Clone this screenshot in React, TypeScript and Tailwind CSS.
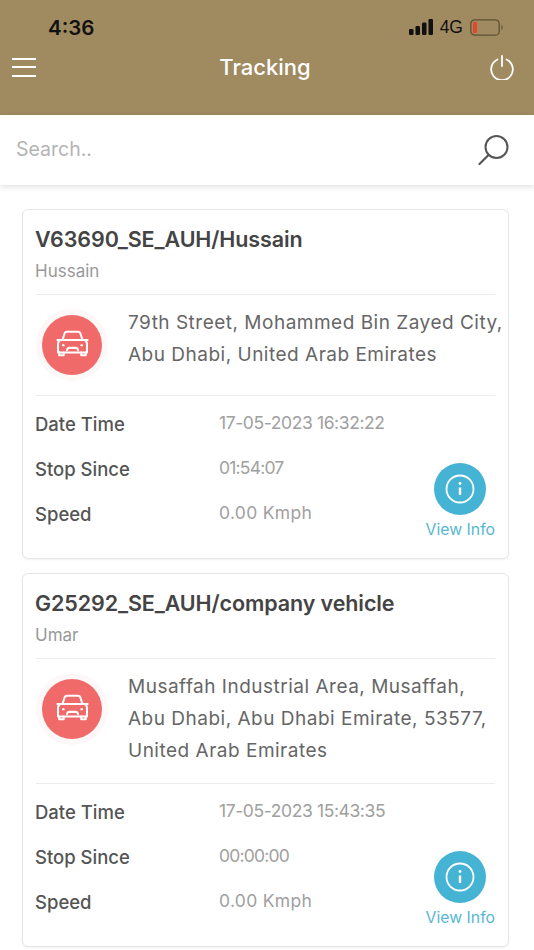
const FONT = 'font-["Inter","Noto_Sans",sans-serif]';

interface Vehicle {
  title: string;
  driver: string;
  address: string[];
  dateTime: string;
  stopSince: string;
  speed: string;
}

const VEHICLES: Vehicle[] = [
  {
    title: 'V63690_SE_AUH/Hussain',
    driver: 'Hussain',
    address: ['79th Street, Mohammed Bin Zayed City,', 'Abu Dhabi, United Arab Emirates'],
    dateTime: '17-05-2023 16:32:22',
    stopSince: '01:54:07',
    speed: '0.00 Kmph',
  },
  {
    title: 'G25292_SE_AUH/company vehicle',
    driver: 'Umar',
    address: ['Musaffah Industrial Area, Musaffah,', 'Abu Dhabi, Abu Dhabi Emirate, 53577,', 'United Arab Emirates'],
    dateTime: '17-05-2023 15:43:35',
    stopSince: '00:00:00',
    speed: '0.00 Kmph',
  },
];

function CarIcon() {
  return (
    <svg width="33" height="27.500" viewBox="0 0 36 30" fill="none" stroke="#fff" strokeWidth="2.2" strokeLinejoin="round" strokeLinecap="round" className="-mt-[3px]">
      <path d="M7 11 9.5 3.5C9.9 2.4 10.8 2 12 2h12c1.200 0 2.100.4 2.500 1.500L29 11" />
      <path d="M1.500 11H34.500" />
      <path d="M4 11.500c-1.200 1-1.800 2.200-1.800 3.500v9.500h31.600V15c0-1.300-.6-2.500-1.800-3.500" />
      <path d="M3.500 24.500v3h5v-3M27.500 24.500v3h5v-3" />
      <path d="M12 22c.4-2 1-2.500 2.500-2.500h7c1.500 0 2.100.5 2.500 2.500" />
      <circle cx="8" cy="16.500" r="1.300" fill="#fff" stroke="none" />
      <circle cx="28" cy="16.500" r="1.300" fill="#fff" stroke="none" />
    </svg>
  );
}

function VehicleCard({ v }: { v: Vehicle }) {
  return (
    <div className="w-[487px] rounded-[6px] border border-[#e6e6e6] bg-white px-[13px] shadow-[0_1px_2px_rgba(0,0,0,0.05)]">
      <div className="border-b border-[#ececec] pb-[12px] pt-[14px]">
        <h2 className="-ml-[1px] text-[21.500px] font-semibold leading-[30px] tracking-[-0.1px] text-[#444]">{v.title}</h2>
        <p className="-ml-[1px] mt-[6px] text-[17px] leading-[22px] text-[#999]">{v.driver}</p>
      </div>
      <div className="flex items-start border-b border-[#ececec] pt-[12px]">
        <div className="mb-[14px] mt-[2px] flex h-[72px] w-[72px] shrink-0 items-center justify-center rounded-full bg-[#fdf8f8]">
          <div className="flex h-[60px] w-[60px] items-center justify-center rounded-full bg-[#f06a6a]">
            <CarIcon />
          </div>
        </div>
        <div className="-mr-[8px] ml-[20px] whitespace-nowrap pb-[16px] text-[19px] leading-[32px] tracking-[0.5px] text-[#666]">
          {v.address.map((line) => (
            <div key={line}>{line}</div>
          ))}
        </div>
      </div>
      <div className="flex items-end justify-between pb-[17px] pt-[14px]">
        <div className="-ml-[1px] flex flex-col gap-[15px] pb-[11px]">
          <div className="flex h-[30px] items-center">
            <span className="w-[184px] text-[18.500px] font-medium text-[#555]">Date Time</span>
            <span className="-mt-[3px] text-[17.500px] tracking-[-0.4px] text-[#a0a0a0]">{v.dateTime}</span>
          </div>
          <div className="flex h-[30px] items-center">
            <span className="w-[184px] text-[18.500px] font-medium text-[#555]">Stop Since</span>
            <span className="-mt-[3px] text-[17.500px] tracking-[-0.8px] text-[#a0a0a0]">{v.stopSince}</span>
          </div>
          <div className="flex h-[30px] items-center">
            <span className="w-[184px] text-[18.500px] font-medium text-[#555]">Speed</span>
            <span className="-mt-[3px] text-[17.500px] tracking-[0.3px] text-[#a0a0a0]">{v.speed}</span>
          </div>
        </div>
        <div className="flex flex-col items-center">
          <div className="flex h-[52px] w-[52px] items-center justify-center rounded-full bg-[#45b3d3]">
            <svg width="30" height="30" viewBox="0 0 30 30" fill="none" stroke="#fff" strokeWidth="1.800">
              <circle cx="15" cy="15" r="13.500" />
              <path d="M15 13.500v7.500" strokeWidth="2.400" />
              <circle cx="15" cy="9.500" r="1.400" fill="#fff" stroke="none" />
            </svg>
          </div>
          <span className="mt-[4px] text-[15.800px] leading-[22px] text-[#57b8d2]">View Info</span>
        </div>
      </div>
    </div>
  );
}

export default function App() {
  return (
    <div className={`${FONT} h-[950px] w-[534px] overflow-hidden bg-white`}>
      <header className="h-[115px] bg-[#a08a60]">
        <div className="flex h-[41px] items-end justify-between pl-[48px] pr-[31px]">
          <span className="text-[20.500px] font-semibold leading-[26px] text-[#111]">4:36</span>
          <div className="mb-[5px] flex items-center gap-[7px]">
            <svg width="24" height="16" viewBox="0 0 24 16" fill="#111">
              <rect x="0" y="10" width="4.500" height="6" rx="1.200" />
              <rect x="6.500" y="7" width="4.500" height="9" rx="1.200" />
              <rect x="13" y="3.500" width="4.500" height="12.500" rx="1.200" />
              <rect x="19.500" y="0" width="4.500" height="16" rx="1.200" />
            </svg>
            <span className="font-['Liberation_Sans'] text-[17.500px] leading-[18px] text-[#111]">4G</span>
            <svg width="33" height="17" viewBox="0 0 33 17" fill="none">
              <rect x="0.800" y="0.800" width="28.400" height="15.400" rx="4" stroke="#5f5030" strokeWidth="1.300" />
              <rect x="3" y="3" width="4" height="11" rx="1" fill="#e8452f" />
              <path d="M31.500 6v5c.8-.4 1.200-1.400 1.200-2.500S32.300 6.400 31.500 6z" fill="#5f5030" />
            </svg>
          </div>
        </div>
        <div className="flex items-center justify-between pl-[12px] pr-[20px] pt-[10px]">
          <div className="flex w-[24px] flex-col gap-[6.500px]">
            <div className="h-[2px] bg-white" />
            <div className="h-[2px] bg-white" />
            <div className="h-[2px] bg-white" />
          </div>
          <h1 className="ml-[4px] text-[22px] font-medium leading-[32px] text-white">Tracking</h1>
          <svg width="24" height="25" viewBox="0 0 24 25" fill="none" stroke="#fff" strokeWidth="1.800" strokeLinecap="round">
            <path d="M7.500 4.500a10.800 10.800 0 1 0 9 0" />
            <path d="M12 1v10" />
          </svg>
        </div>
      </header>
      <div className="flex h-[70px] items-center justify-between bg-white pl-[16px] pr-[24px] shadow-[0_2px_6px_rgba(0,0,0,0.12)]">
        <span className="text-[19.500px] text-[#b4b4b4]">Search..</span>
        <svg width="32" height="32" viewBox="0 0 32 32" fill="none" stroke="#555" strokeWidth="2" strokeLinecap="round">
          <circle cx="18.500" cy="13" r="11" />
          <path d="M10.500 21 1.500 30" strokeWidth="2.200" />
        </svg>
      </div>
      <div className="flex flex-col gap-[14px] pl-[22px] pt-[24px]">
        {VEHICLES.map((v) => (
          <VehicleCard key={v.title} v={v} />
        ))}
      </div>
    </div>
  );
}
